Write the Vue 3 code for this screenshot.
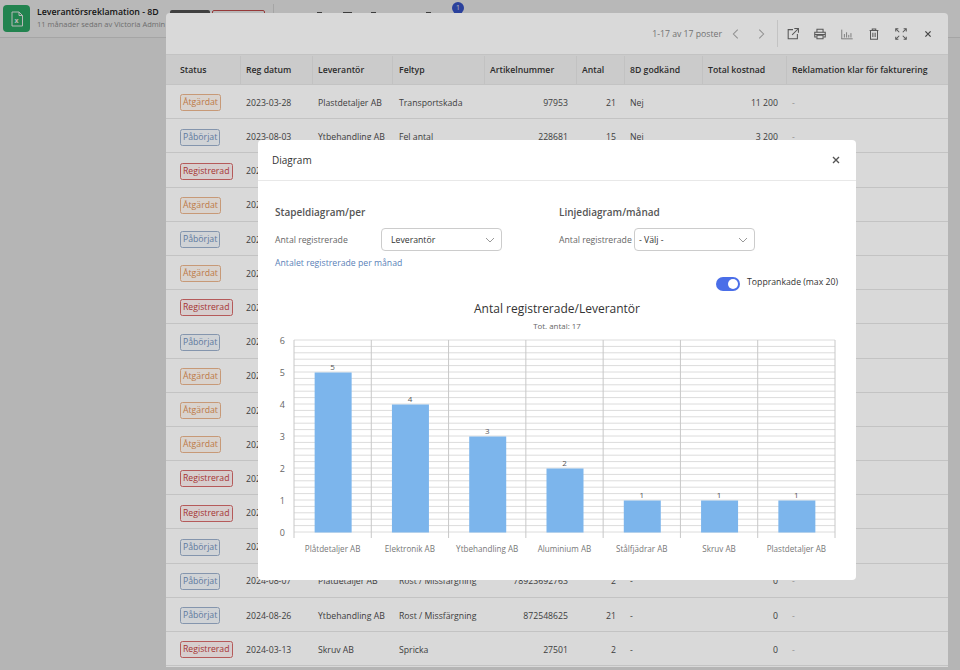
<template>
  <div class="page">
    <!-- sidan bakom -->
    <header class="topbar">
      <div class="file-icon">
        <svg width="14" height="16" viewBox="0 0 14 16" fill="none" stroke="#fff" stroke-width="1">
          <path d="M2 1h7l3.5 3.5V15H2z" />
          <path d="M9 1v3.5h3.5" />
          <text x="4.6" y="12.4" class="x-mark">x</text>
        </svg>
      </div>
      <div class="file-text">
        <div class="file-title">Leverantörsreklamation - 8D</div>
        <div class="file-sub">11 månader sedan av Victoria Admin</div>
      </div>
      <div class="top-btn dark"></div>
      <div class="top-btn outline"></div>
      <div class="top-sep"></div>
      <div class="top-nav">
        <span class="nav-mark m1"></span>
        <span class="nav-mark m2"></span>
        <span class="nav-mark m3"></span>
        <span class="nav-mark m4"></span>
      </div>
      <span class="badge">1</span>
    </header>
    <div class="dim"></div>

    <!-- listpanelen -->
    <section class="drawer">
      <div class="toolbar">
        <span class="count">1-17 av 17 poster</span>
        <svg class="tool chev" viewBox="0 0 16 16"><path d="M10 3L5 8l5 5" /></svg>
        <svg class="tool chev" viewBox="0 0 16 16"><path d="M6 3l5 5-5 5" /></svg>
        <span class="tool-sep"></span>
        <svg class="tool" viewBox="0 0 16 16">
          <path d="M8 3H2.500v10.500H13V8" />
          <path d="M7 9l7-7M9.500 1.800h4.700v4.700" />
        </svg>
        <svg class="tool" viewBox="0 0 16 16">
          <path d="M4.500 6V2.500h7V6" />
          <path d="M4 11.500H2V6h12v5.500h-2" />
          <path d="M4.500 9.500h7v4h-7zM2 8.500h12" />
        </svg>
        <svg class="tool thin" viewBox="0 0 16 16">
          <path d="M1.500 13.500h13M2 3v10.500M5 12V8M7.500 12V6M10 12V9M12.500 12V7" />
        </svg>
        <svg class="tool" viewBox="0 0 16 16">
          <path d="M3 4h10M6 4V2.200h4V4M4 4v10h8V4M6.700 6.500v5M9.300 6.500v5" />
        </svg>
        <svg class="tool" viewBox="0 0 16 16">
          <path d="M2 5V2h3M14 5V2h-3M2 11v3h3M14 11v3h-3" />
          <path d="M2.500 2.500l3.500 3.500M13.500 2.500L10 6M2.500 13.500L6 10M13.500 13.500L10 10" />
        </svg>
        <svg class="tool close" viewBox="0 0 16 16"><path d="M5 5l6 6M11 5l-6 6" /></svg>
      </div>

      <div class="table">
        <div class="row head">
          <div v-for="c in columns" :key="c.key" class="cell" :class="c.cls">{{ c.label }}</div>
        </div>
        <div v-for="(r, i) in rows" :key="i" class="row">
          <div class="cell c-status"><span class="tag" :class="tagClass[r[0]]">{{ r[0] }}</span></div>
          <div class="cell c-date">{{ r[1] }}</div>
          <div class="cell c-supplier">{{ r[2] }}</div>
          <div class="cell c-type">{{ r[3] }}</div>
          <div class="cell c-article num">{{ r[4] }}</div>
          <div class="cell c-qty num">{{ r[5] }}</div>
          <div class="cell c-approved">{{ r[6] }}</div>
          <div class="cell c-cost num">{{ r[7] }}</div>
          <div class="cell c-ready muted">{{ r[8] }}</div>
        </div>
      </div>
    </section>
    <div class="dim"></div>

    <!-- diagramdialogen -->
    <section class="modal">
      <div class="modal-head">
        <span>Diagram</span>
        <svg class="modal-close" viewBox="0 0 16 16"><path d="M4 4l8 8M12 4l-8 8" /></svg>
      </div>
      <div class="modal-body">
        <div class="form-col">
          <h3>Stapeldiagram/per</h3>
          <div class="form-row">
            <label class="wide">Antal registrerade</label>
            <div class="select">
              Leverantör
              <svg viewBox="0 0 12 12"><path d="M2 4l4 4 4-4" /></svg>
            </div>
          </div>
          <a class="link">Antalet registrerade per månad</a>
        </div>
        <div class="form-col">
          <h3>Linjediagram/månad</h3>
          <div class="form-row">
            <label>Antal registrerade</label>
            <div class="select narrow-pad">
              - Välj -
              <svg viewBox="0 0 12 12"><path d="M2 4l4 4 4-4" /></svg>
            </div>
          </div>
        </div>
      </div>
      <div class="toggle-row">
        <span class="toggle"><span class="knob"></span></span>
        <span>Topprankade (max 20)</span>
      </div>

      <svg class="chart" width="598" height="264" viewBox="0 0 598 264">
        <text x="299" y="14" class="chart-title">Antal registrerade/Leverantör</text>
        <text x="299" y="30" class="chart-sub">Tot. antal: 17</text>
        <line v-for="y in minorLines" :key="'h' + y" x1="36" :x2="36 + plotW" :y1="y" :y2="y" class="grid" />
        <line v-for="x in catLines" :key="'v' + x" :x1="x" :x2="x" y1="41" y2="239" class="vgrid" />
        <text v-for="n in 7" :key="'y' + n" x="27" :y="yOf(n - 1) + 3" class="y-label">{{ n - 1 }}</text>
        <g v-for="(b, i) in bars" :key="b.name">
          <rect :x="centerOf(i) - 18" :y="yOf(b.value)" width="37" :height="b.value * unit" fill="#7cb5ec" />
          <text :x="centerOf(i)" :y="yOf(b.value) - 3" class="bar-value">{{ b.value }}</text>
          <text :x="centerOf(i)" y="253" class="x-label">{{ b.name }}</text>
        </g>
      </svg>
    </section>
  </div>
</template>

<script setup>
const columns = [
  { key: 'status', label: 'Status', cls: 'c-status' },
  { key: 'date', label: 'Reg datum', cls: 'c-date' },
  { key: 'supplier', label: 'Leverantör', cls: 'c-supplier' },
  { key: 'type', label: 'Feltyp', cls: 'c-type' },
  { key: 'article', label: 'Artikelnummer', cls: 'c-article' },
  { key: 'qty', label: 'Antal', cls: 'c-qty' },
  { key: 'approved', label: '8D godkänd', cls: 'c-approved' },
  { key: 'cost', label: 'Total kostnad', cls: 'c-cost' },
  { key: 'ready', label: 'Reklamation klar för fakturering', cls: 'c-ready' }
]

const tagClass = { 'Åtgärdat': 'done', 'Påbörjat': 'started', 'Registrerad': 'registered' }

const A = 'Åtgärdat'
const P = 'Påbörjat'
const R = 'Registrerad'

// raderna bakom dialogen syns bara till och med "202"
const hidden = status => [status, '202', '', '', '', '', '', '', '']

const rows = [
  [A, '2023-03-28', 'Plastdetaljer AB', 'Transportskada', '97953', '21', 'Nej', '11 200', '-'],
  [P, '2023-08-03', 'Ytbehandling AB', 'Fel antal', '228681', '15', 'Nej', '3 200', '-'],
  ...[R, A, P, A, R, P, A, A, A, R, R, P].map(hidden),
  [P, '2024-08-07', 'Platdetaljer AB', 'Rost / Missfärgning', '78923692763', '2', '-', '0', '-'],
  [P, '2024-08-26', 'Ytbehandling AB', 'Rost / Missfärgning', '872548625', '21', '-', '0', '-'],
  [R, '2024-03-13', 'Skruv AB', 'Spricka', '27501', '2', '-', '0', '-']
]

const bars = [
  { name: 'Plåtdetaljer AB', value: 5 },
  { name: 'Elektronik AB', value: 4 },
  { name: 'Ytbehandling AB', value: 3 },
  { name: 'Aluminium AB', value: 2 },
  { name: 'Stålfjädrar AB', value: 1 },
  { name: 'Skruv AB', value: 1 },
  { name: 'Plastdetaljer AB', value: 1 }
]

// plotytan i svg:ens koordinater
const unit = 32
const baseY = 233
const plotW = 541
const catW = plotW / bars.length

const yOf = v => baseY - v * unit + 0.5
const centerOf = i => 36 + catW * (i + 0.5)

const minorLines = Array.from({ length: 31 }, (_, i) => baseY - i * (unit / 5))
const catLines = Array.from({ length: bars.length + 1 }, (_, i) => 36 + i * catW)
</script>

<style>
html,
body {
  margin: 0;
  background: #fbfbfb;
}
</style>

<style scoped>
.page {
  position: relative;
  width: 960px;
  height: 670px;
  overflow: hidden;
  background: #fbfbfb;
  font-family: "Open Sans", "Noto Sans", sans-serif;
  font-size: 8.7px;
  color: #4a4a4a;
}

.topbar {
  display: flex;
  align-items: flex-start;
  height: 38px;
  box-sizing: border-box;
  border-bottom: 1px solid #e4e4e4;
  background: #fff;
  position: relative;
}

.file-icon {
  display: flex;
  align-items: center;
  justify-content: center;
  width: 27px;
  height: 27px;
  margin: 5px 0 0 3px;
  border-radius: 4px;
  background: #2fb56e;
}

.x-mark {
  font-size: 7px;
  fill: #fff;
  stroke: none;
  font-weight: 700;
}

.file-text {
  width: 133px;
  margin: 6px 0 0 7px;
  white-space: nowrap;
}

.file-title {
  font-size: 8.8px;
  font-weight: 600;
  line-height: 13px;
  color: #222;
}

.file-sub {
  font-size: 7.5px;
  line-height: 11px;
  color: #999;
}

.top-btn {
  height: 14px;
  margin-top: 10px;
  border-radius: 2px;
  box-sizing: border-box;
}

.top-btn.dark {
  width: 40px;
  background: #5a5a5a;
}

.top-btn.outline {
  width: 53px;
  margin-left: 2px;
  border: 1px solid #d05050;
}

.top-sep {
  width: 1px;
  height: 26px;
  margin: 4px 0 0 8px;
  background: #e4e4e4;
}

.top-nav {
  position: relative;
  flex: 1;
}

.nav-mark {
  position: absolute;
  top: 12px;
  width: 5px;
  height: 2px;
  background: #555;
}

.m1 { left: 43px; }
.m2 { left: 69px; width: 9px; }
.m3 { left: 97px; }
.m4 { left: 152px; }

.badge {
  position: absolute;
  left: 452px;
  top: 2px;
  width: 12px;
  height: 12px;
  border-radius: 50%;
  background: #3d5bd9;
  color: #fff;
  font-size: 7px;
  line-height: 12px;
  text-align: center;
}

.dim {
  position: absolute;
  inset: 0;
  background: rgba(0, 0, 0, 0.15);
}

.drawer {
  position: absolute;
  left: 166px;
  top: 13px;
  width: 782px;
  height: 654px;
  background: #fff;
  border-radius: 4px 4px 0 0;
  overflow: hidden;
}

.toolbar {
  display: flex;
  align-items: center;
  justify-content: flex-end;
  height: 41px;
  padding-right: 13px;
  box-sizing: border-box;
}

.count {
  margin-right: 7px;
  color: #888;
}

.tool {
  width: 14px;
  height: 14px;
  margin-left: 13px;
  fill: none;
  stroke: #666;
  stroke-width: 1.2;
}

.tool.chev {
  margin-left: 0;
  margin-right: 11px;
  stroke: #aaa;
}

.tool.thin {
  stroke: #888;
  stroke-width: 1;
}

.tool.close {
  stroke: #555;
  stroke-width: 1.5;
}

.tool-sep {
  width: 1px;
  height: 27px;
  margin-left: -2px;
  margin-right: -5px;
  background: #e6e6e6;
}

.row {
  display: flex;
  align-items: center;
  height: 34.2px;
  padding-top: 2.5px;
  box-sizing: border-box;
  border-bottom: 1px solid #e6e6e6;
  white-space: nowrap;
}

.row.head {
  height: 31px;
  padding-top: 0;
  background: #efefef;
  border-top: 1px solid #e6e6e6;
  font-size: 8.7px;
  font-weight: 600;
  color: #333;
}

.row.head .cell {
  position: relative;
}

.row.head .cell + .cell::before {
  content: "";
  position: absolute;
  left: 0;
  top: -8px;
  bottom: -8px;
  width: 1px;
  background: #e4e4e4;
}

.cell {
  box-sizing: border-box;
  padding-left: 6px;
}

.num {
  text-align: right;
  padding: 0 8px 0 0;
}

.muted {
  color: #aaa;
}

.c-status { width: 74px; padding-left: 14px; }
.c-date { width: 72px; }
.c-supplier { width: 80px; }
.c-type { width: 92px; padding-left: 7px; }
.c-article { width: 92px; }
.c-qty { width: 48px; }
.c-approved { width: 78px; }
.c-cost { width: 84px; }
.c-ready { flex: 1; }

.tag {
  display: inline-block;
  padding: 0 2px;
  line-height: 15px;
  border: 1px solid;
  border-radius: 2.5px;
}

.tag.done {
  color: #e08f52;
  border-color: #eab48c;
  background: #fff8f2;
}

.tag.started {
  color: #6f8fbb;
  border-color: #9cb0cc;
  background: #f5f8fc;
}

.tag.registered {
  color: #c43c3c;
  border-color: #d56a6a;
  background: #fdf3f3;
}

.modal {
  position: absolute;
  left: 258px;
  top: 140px;
  width: 598px;
  height: 440px;
  background: #fff;
  border-radius: 4px;
  overflow: hidden;
}

.modal-head {
  display: flex;
  align-items: center;
  justify-content: space-between;
  height: 41px;
  padding: 0 14px;
  box-sizing: border-box;
  border-bottom: 1px solid #e8e8e8;
  font-size: 10px;
  color: #333;
}

.modal-close {
  width: 12px;
  height: 12px;
  fill: none;
  stroke: #555;
  stroke-width: 1.8;
}

.modal-body {
  display: grid;
  grid-template-columns: 284px 1fr;
  padding: 24px 17px 0;
}

h3 {
  margin: 0 0 8px;
  font-size: 10px;
  font-weight: 600;
  line-height: 15px;
  color: #555;
}

.form-row {
  display: flex;
  align-items: center;
}

label {
  width: 75px;
  color: #666;
  white-space: nowrap;
}

label.wide {
  width: 106px;
}

.select {
  display: flex;
  align-items: center;
  justify-content: space-between;
  width: 121px;
  height: 23px;
  padding: 0 5px 0 9px;
  box-sizing: border-box;
  border: 1px solid #ccc;
  border-radius: 4px;
  color: #333;
}

.select.narrow-pad {
  padding-left: 4px;
}

.select svg {
  width: 12px;
  height: 12px;
  fill: none;
  stroke: #999;
  stroke-width: 1;
}

.link {
  display: block;
  margin-top: 5px;
  line-height: 14px;
  color: #5a7fb8;
}

.toggle-row {
  display: flex;
  align-items: flex-start;
  justify-content: flex-end;
  gap: 7px;
  margin-top: 6px;
  padding-right: 18px;
  line-height: 12px;
  color: #333;
}

.toggle {
  display: flex;
  align-items: center;
  justify-content: flex-end;
  width: 24px;
  height: 14px;
  margin-top: 1px;
  padding-right: 2px;
  box-sizing: border-box;
  border-radius: 7px;
  background: #4a6ee8;
}

.knob {
  width: 10px;
  height: 10px;
  border-radius: 50%;
  background: #fff;
}

.chart {
  display: block;
  margin-top: 8px;
}

.chart text {
  font-family: "Open Sans", "Noto Sans", sans-serif;
  text-anchor: middle;
}

.chart .chart-title {
  font-size: 12px;
  fill: #333;
}

.chart .chart-sub {
  font-size: 7.9px;
  fill: #666;
}

.grid {
  stroke: #dcdcdc;
  stroke-width: 1;
}

.vgrid {
  stroke: #c8c8c8;
  stroke-width: 1;
}

.chart .y-label {
  font-size: 9px;
  fill: #666;
  text-anchor: end;
}

.chart .bar-value {
  font-size: 8px;
  fill: #555;
}

.chart .x-label {
  font-size: 8.1px;
  fill: #777;
}
</style>
